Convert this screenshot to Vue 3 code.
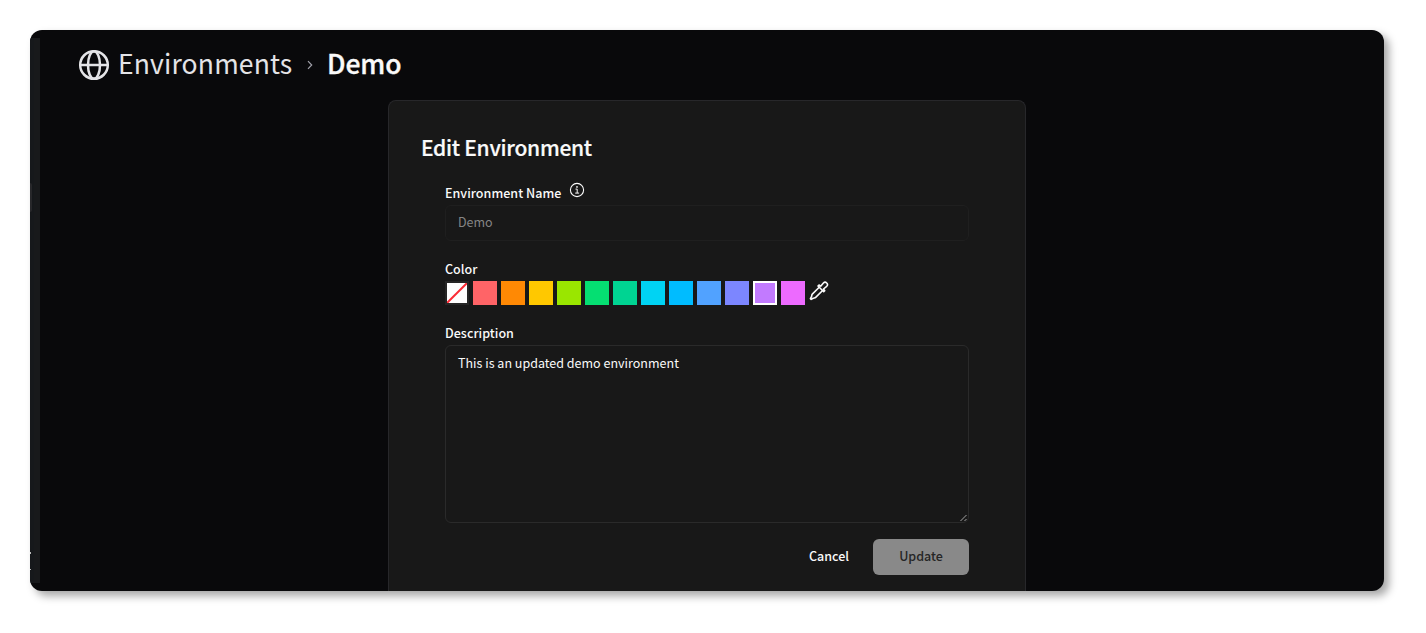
<script setup>
import { ref } from 'vue'

const colors = ['#ff6467', '#ff8904', '#ffc800', '#9ae600', '#05df72', '#00d492', '#00d3f3', '#00bcff', '#51a2ff', '#7c86ff', '#c27aff', '#ed6aff']
const selected = ref('#c27aff')
const description = ref('This is an updated demo environment')
</script>

<template>
  <div class="page">
    <div class="window">
      <aside class="rail">
        <span class="handle"></span>
        <span class="dot first"></span>
        <span class="dot second"></span>
      </aside>
      <main class="main">
        <nav class="crumbs">
          <svg class="globe" viewBox="0 0 32 32" fill="none" stroke="currentColor" stroke-width="2.5">
            <circle cx="16" cy="16" r="13.8" />
            <ellipse cx="16" cy="16" rx="6" ry="13.8" />
            <path d="M2.2 16h27.6" />
          </svg>
          <span class="parent">Environments</span>
          <svg class="chevron" viewBox="0 0 8 10" fill="none" stroke="currentColor" stroke-width="1.2"><path d="M2 1.2l3.7 3.800-3.700 3.800" /></svg>
          <span class="current">Demo</span>
        </nav>
        <section class="card">
          <h1>Edit Environment</h1>
          <form class="form" @submit.prevent>
            <div class="label name-label">
              <span>Environment Name</span>
              <svg class="info" viewBox="0 0 16 16" fill="none" stroke="currentColor">
                <circle cx="8" cy="8" r="6.6" stroke-width="1.1" />
                <path d="M6.5 7.1h1.700v3.900M6.200 11.100h3.900" stroke-width="1" />
                <circle cx="8" cy="4.9" r=".85" fill="currentColor" stroke="none" />
              </svg>
            </div>
            <div class="input"><span>Demo</span></div>
            <div class="label color-label"><span>Color</span></div>
            <div class="swatches">
              <button type="button" class="swatch none">
                <svg viewBox="0 0 20 20"><path d="M0 20L20 0" stroke="#fb2c36" stroke-width="2" /></svg>
              </button>
              <button v-for="c in colors" :key="c" type="button" class="swatch" :class="{ selected: c === selected }" :style="{ backgroundColor: c }"></button>
              <svg class="dropper" viewBox="0 0 20 20" fill="none" stroke="currentColor" stroke-width="1.6" stroke-linejoin="round" stroke-linecap="round">
                <path d="M10.200 6.200L3.300 13.100c-.7.7-.4 1.800-.8 2.500L1.400 17.600l.8.800 2-1.200c.7-.4 1.800-.1 2.500-.8l6.900-6.900" />
                <path d="M9 5l5.700 5.700 1-1-1.200-1.700 3.200-2.700a2.300 2.300 0 0 0-3.300-3.300L11.700 5.200 10 4z" />
              </svg>
            </div>
            <div class="label desc-label"><span>Description</span></div>
            <div class="area">
              <span>{{ description }}</span>
              <svg class="grip" viewBox="0 0 8 8" fill="none" stroke="#c8c8c8" stroke-width=".8"><path d="M.5 7l6-6M4.500 7l2-2" /></svg>
            </div>
            <div class="actions">
              <button type="button" class="cancel">Cancel</button>
              <button type="submit" class="update">Update</button>
            </div>
          </form>
        </section>
      </main>
    </div>
  </div>
</template>

<style>
body { background: #fff; overflow: hidden; }
</style>

<style scoped>
* { box-sizing: border-box; }
.page { height: 633px; padding: 30px 42px 42px 30px; font-family: "Noto Sans CJK SC", "Noto Sans", sans-serif; font-size: 12.5px; color: #fafafa; }
.window { display: flex; height: 561px; border-radius: 12px; overflow: hidden; background: #09090b; box-shadow: 5px 5px 8px rgba(0, 0, 0, .35); }
.rail { position: relative; width: 10px; height: 545px; margin-top: 8px; background: linear-gradient(90deg, #16181b 4px, #18191b 4px); }
.handle { position: absolute; left: 0; top: 145px; width: 2px; height: 29px; background: #27272a; border-radius: 0 2px 2px 0; }
.dot { position: absolute; left: 0; width: 1px; height: 2px; background: #bbb; }
.first { top: 514px; }
.second { top: 531px; height: 1px; }
.main { flex: 1; display: flex; flex-direction: column; }
.crumbs { display: flex; flex-shrink: 0; align-items: center; height: 70px; padding-left: 38px; }
.globe { width: 32px; height: 32px; color: #e4e4e7; }
.parent { margin: -4px 0 0 8px; width: 175px; font-size: 26.5px; line-height: 40px; letter-spacing: .15px; color: #e4e4e7; white-space: nowrap; }
.chevron { width: 8px; height: 10px; margin-left: 13px; color: #a1a1aa; }
.current { margin: -4px 0 0 13px; font-size: 26.5px; line-height: 40px; letter-spacing: -.1px; font-weight: 500; -webkit-text-stroke: .35px currentColor; }
.card { flex-shrink: 0; width: 638px; height: 510px; margin-left: 348px; padding: 31px 32px; border: 1px solid #27272a; border-bottom: 0; border-radius: 8px 8px 0 0; background: #181818; }
h1 { margin: 0; font-size: 21px; line-height: 30px; font-weight: 500; letter-spacing: -.28px; -webkit-text-stroke: .2px currentColor; white-space: nowrap; }
.form { margin: 21px 24px 0; }
.label { display: flex; height: 20px; line-height: 20px; font-weight: 500; letter-spacing: .03px; white-space: nowrap; }
.name-label { height: 22px; }
.info { width: 16px; height: 16px; margin-left: 8px; margin-top: -1px; }
.input { height: 36px; padding: 6px 12px; line-height: 20px; border: 1px solid #1f1f1f; border-radius: 6px; color: #858585; }
.color-label { margin-top: 18px; }
.swatches { display: flex; gap: 4px; height: 24px; margin-top: 2px; }
.swatch { width: 24px; height: 24px; padding: 0; border: 0; border-radius: 0; }
.none { display: block; background: #fff; border: 2px solid #262626; }
.none svg { display: block; width: 20px; height: 20px; }
.selected { border: 2px solid #fff; }
.dropper { width: 20px; height: 20px; }
.desc-label { margin-top: 18px; height: 22px; }
.area { position: relative; height: 178px; padding: 7px 12px; line-height: 20px; letter-spacing: .01px; border: 1px solid #2a2a2a; border-radius: 6px; }
.grip { position: absolute; right: 0; bottom: 0; width: 8px; height: 8px; }
.actions { display: flex; justify-content: flex-end; gap: 8px; margin-top: 16px; }
.actions button { height: 36px; padding: 0 0 2px; border: 0; border-radius: 6px; background: transparent; color: #fafafa; font: inherit; font-weight: 500; line-height: 20px; }
.actions .cancel { width: 72px; }
.actions .update { width: 96px; background: #898989; color: #252525; }
</style>
